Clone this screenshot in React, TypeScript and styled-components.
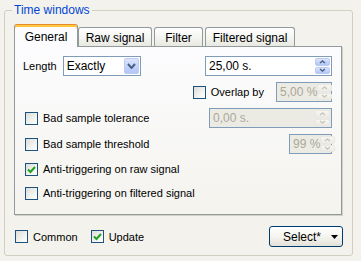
import styled, { createGlobalStyle } from 'styled-components';

const GlobalStyle = createGlobalStyle`
  html, body {
    margin: 0;
    padding: 0;
    background: #f3f2ec;
  }
  body {
    font-family: 'Liberation Sans Narrow', 'Liberation Sans', Arial, sans-serif;
    font-size: 11px;
    color: #000;
  }
`;

const Page = styled.div`
  width: 361px;
  height: 261px;
  box-sizing: border-box;
  padding: 3px 8px 5px 4px;
`;

const Group = styled.fieldset`
  margin: 0;
  height: 100%;
  box-sizing: border-box;
  border: 1px solid #d0d0bf;
  border-radius: 3px;
  padding: 7px 10px 8px 9px;
  display: flex;
  flex-direction: column;
`;

const Legend = styled.legend`
  color: #0046d5;
  font-size: 12px;
  line-height: 14px;
  padding: 0 2px;
  margin-left: -2px;
`;

const TabBar = styled.div`
  display: flex;
  align-items: flex-end;
  height: 22px;
  position: relative;
  z-index: 1;
`;

const Tab = styled.div<{ $active?: boolean; $w: number; $gap?: number }>`
  box-sizing: border-box;
  width: ${(p) => p.$w}px;
  margin-left: ${(p) => p.$gap ?? 0}px;
  display: flex;
  align-items: center;
  justify-content: center;
  font-size: 12px;
  border: 1px solid #919b9c;
  border-bottom: none;
  border-radius: 3px 3px 0 0;
  ${(p) =>
    p.$active
      ? `
    height: 23px;
    margin-bottom: -1px;
    padding-top: 1px;
    border-top: 1px solid #e68b2c;
    box-shadow: inset 0 2px 0 #ffc73c;
    background: #fcfcfe;
  `
      : `
    height: 19px;
    padding-top: 1px;
    background: linear-gradient(#ffffff, #f3f3ef 60%, #e8e8e1);
  `}
`;

const Pane = styled.div`
  box-sizing: border-box;
  height: 169px;
  border: 1px solid #919b9c;
  box-shadow: 1px 1px 0 #d3d1c6;
  background: linear-gradient(#fcfcfe, #f4f3ee);
  padding: 9px 9px 0 8px;
  display: flex;
  flex-direction: column;
  gap: 6px;
`;

const Row = styled.div<{ $h?: number; $indent?: number }>`
  display: flex;
  align-items: center;
  height: ${(p) => p.$h ?? 20}px;
  padding-left: ${(p) => p.$indent ?? 0}px;
`;

const Label = styled.span`
  white-space: nowrap;
`;

const Right = styled.div<{ $gap?: number }>`
  margin-left: auto;
  display: flex;
  align-items: center;
  gap: ${(p) => p.$gap ?? 0}px;
`;

const Combo = styled.div`
  box-sizing: border-box;
  width: 78px;
  height: 20px;
  margin-left: 6px;
  border: 1px solid #7f9db9;
  background: #fff;
  display: flex;
  align-items: center;
  font-size: 12px;
  padding: 1px 1px 1px 3px;
`;

const Field = styled.div<{ $w: number; $disabled?: boolean }>`
  box-sizing: border-box;
  width: ${(p) => p.$w}px;
  height: 20px;
  border: 1px solid #7f9db9;
  background: ${(p) => (p.$disabled ? '#ebebe4' : '#fff')};
  color: ${(p) => (p.$disabled ? '#aca899' : '#000')};
  display: flex;
  align-items: center;
  font-size: 12px;
  padding: 1px 1px 1px 3px;
`;

const Value = styled.span`
  flex: 1;
  white-space: nowrap;
`;

const DropButton = styled.div`
  box-sizing: border-box;
  width: 15px;
  height: 100%;
  border: 1px solid #bccbf4;
  border-radius: 2px;
  background: linear-gradient(#dbe5fd, #c1d1f9 60%, #b2c5f7);
  display: flex;
  align-items: center;
  justify-content: center;
`;

const SpinButtons = styled.div`
  width: 15px;
  height: 100%;
  display: flex;
  flex-direction: column;
  gap: 1px;
  flex-shrink: 0;
`;

const SpinHalf = styled.div<{ $disabled?: boolean }>`
  flex: 1;
  box-sizing: border-box;
  border: 1px solid ${(p) => (p.$disabled ? '#e8e7e1' : '#bccbf4')};
  border-radius: 2px;
  background: ${(p) =>
    p.$disabled
      ? 'linear-gradient(#f7f6f2, #ecebe5)'
      : 'linear-gradient(#dbe5fd, #c1d1f9 60%, #b2c5f7)'};
  display: flex;
  align-items: center;
  justify-content: center;
`;

const CheckRow = styled.label`
  display: flex;
  align-items: center;
  gap: 5px;
  white-space: nowrap;
`;

const Box = styled.span`
  box-sizing: border-box;
  width: 13px;
  height: 13px;
  border: 1px solid #1c5180;
  background: linear-gradient(135deg, #dcdcd7, #f6f6f4 70%, #ffffff);
  display: inline-flex;
  align-items: center;
  justify-content: center;
  flex-shrink: 0;
`;

const Footer = styled.div`
  display: flex;
  align-items: center;
  height: 21px;
  margin-top: auto;
  padding-left: 1px;
  gap: 13px;
`;

const Button = styled.div`
  box-sizing: border-box;
  margin-left: auto;
  margin-right: -1px;
  width: 74px;
  height: 21px;
  border: 1px solid #003c74;
  border-radius: 3px;
  background: linear-gradient(#ffffff, #f5f4ef 50%, #e3e1d8);
  display: flex;
  align-items: center;
  font-size: 12px;
  padding: 0 4px 0 13px;
`;

const ButtonText = styled.span`
  flex: 1;
`;

function Chevron({ up, color, size = 'small' }: { up?: boolean; color: string; size?: 'small' | 'big' }) {
  const w = size === 'big' ? 9 : 7;
  const h = size === 'big' ? 6 : 4;
  const d = up
    ? `M1 ${h - 1} L${w / 2} 1 L${w - 1} ${h - 1}`
    : `M1 1 L${w / 2} ${h - 1} L${w - 1} 1`;
  return (
    <svg width={w} height={h} viewBox={`0 0 ${w} ${h}`}>
      <path d={d} fill="none" stroke={color} strokeWidth={size === 'big' ? 2 : 1.5} />
    </svg>
  );
}

function CheckBox({ label, checked }: { label: string; checked?: boolean }) {
  return (
    <CheckRow>
      <Box>
        {checked && (
          <svg width="9" height="9" viewBox="0 0 9 9">
            <path d="M1 4.5 L3.5 7 L8 2" fill="none" stroke="#21a121" strokeWidth="2" />
          </svg>
        )}
      </Box>
      <Label>{label}</Label>
    </CheckRow>
  );
}

function Spin({ value, width, disabled }: { value: string; width: number; disabled?: boolean }) {
  const arrow = disabled ? '#c9c7ba' : '#4d6185';
  return (
    <Field $w={width} $disabled={disabled}>
      <Value>{value}</Value>
      <SpinButtons>
        <SpinHalf $disabled={disabled}>
          <Chevron up color={arrow} />
        </SpinHalf>
        <SpinHalf $disabled={disabled}>
          <Chevron color={arrow} />
        </SpinHalf>
      </SpinButtons>
    </Field>
  );
}

export default function App() {
  return (
    <>
      <GlobalStyle />
      <Page>
        <Group>
          <Legend>Time windows</Legend>
          <TabBar>
            <Tab $active $w={64}>General</Tab>
            <Tab $w={74}>Raw signal</Tab>
            <Tab $w={49} $gap={2}>Filter</Tab>
            <Tab $w={90} $gap={2}>Filtered signal</Tab>
          </TabBar>
          <Pane>
            <Row>
              <Label>Length</Label>
              <Combo>
                <Value>Exactly</Value>
                <DropButton>
                  <Chevron color="#4d6185" size="big" />
                </DropButton>
              </Combo>
              <Right>
                <Spin value="25,00 s." width={127} />
              </Right>
            </Row>
            <Row>
              <Right $gap={12}>
                <CheckBox label="Overlap by" />
                <Spin value="5,00 %" width={56} disabled />
              </Right>
            </Row>
            <Row $indent={2}>
              <CheckBox label="Bad sample tolerance" />
              <Right>
                <Spin value="0,00 s." width={123} disabled />
              </Right>
            </Row>
            <Row $indent={2}>
              <CheckBox label="Bad sample threshold" />
              <Right>
                <Spin value="99 %" width={43} disabled />
              </Right>
            </Row>
            <Row $h={18} $indent={2}>
              <CheckBox label="Anti-triggering on raw signal" checked />
            </Row>
            <Row $h={18} $indent={2}>
              <CheckBox label="Anti-triggering on filtered signal" />
            </Row>
          </Pane>
          <Footer>
            <CheckBox label="Common" />
            <CheckBox label="Update" checked />
            <Button>
              <ButtonText>Select*</ButtonText>
              <svg width="7" height="4" viewBox="0 0 7 4">
                <path d="M0 0 H7 L3.5 4 Z" fill="#000" />
              </svg>
            </Button>
          </Footer>
        </Group>
      </Page>
    </>
  );
}
